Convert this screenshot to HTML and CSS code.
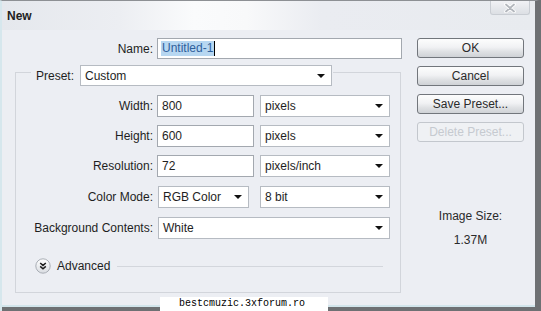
FILE: index.html
```html
<!DOCTYPE html>
<html lang="en">

<head>
	<meta charset="UTF-8">
	<title>New</title>
	<link rel="stylesheet" href="styles.css">
</head>

<body>
	<div class="dialog">
		<div class="titlebar">
			<span class="title">New</span>
			<button class="close" title="Close">
				<svg width="14" height="10" viewBox="0 0 14 10">
					<path d="M3 1.5 L11 8.5 M11 1.5 L3 8.5" stroke="#ffffff" stroke-width="3.6" stroke-linecap="round" fill="none" />
					<path d="M3 1.5 L11 8.5 M11 1.5 L3 8.5" stroke="#b3b7bd" stroke-width="1.8" stroke-linecap="round" fill="none" />
				</svg>
			</button>
		</div>

		<div class="content">
			<div class="main">
				<div class="name-row">
					<label>Name:</label>
					<div class="field name-field"><span class="selected">Untitled-1</span><span class="caret"></span></div>
				</div>

				<fieldset class="preset">
					<legend>
						<label>Preset:</label>
						<div class="select preset-select">Custom<span class="arrow"></span></div>
					</legend>

					<div class="rows">
						<div class="row">
							<label>Width:</label>
							<div class="field num">800</div>
							<div class="select unit">pixels<span class="arrow"></span></div>
						</div>
						<div class="row">
							<label>Height:</label>
							<div class="field num">600</div>
							<div class="select unit">pixels<span class="arrow"></span></div>
						</div>
						<div class="row">
							<label>Resolution:</label>
							<div class="field num">72</div>
							<div class="select unit">pixels/inch<span class="arrow"></span></div>
						</div>
						<div class="row mode">
							<label>Color Mode:</label>
							<div class="select color-mode">RGB Color<span class="arrow"></span></div>
							<div class="select bits">8 bit<span class="arrow"></span></div>
						</div>
						<div class="row mode">
							<label>Background Contents:</label>
							<div class="select background">White<span class="arrow"></span></div>
						</div>
					</div>

					<div class="advanced">
						<svg width="16" height="16" viewBox="0 0 16 16">
							<defs>
								<linearGradient id="adv" x1="0" y1="0" x2="0" y2="1">
									<stop offset="0" stop-color="#ffffff" />
									<stop offset="1" stop-color="#d9dce1" />
								</linearGradient>
							</defs>
							<circle cx="8" cy="8" r="7.2" fill="url(#adv)" stroke="#a9aeb5" />
							<path d="M5.2 5 L8 7.4 L10.8 5 M5.2 8.4 L8 10.8 L10.8 8.4" stroke="#1c1c1c" stroke-width="1.5" fill="none" />
						</svg>
						<span class="advanced-text">Advanced</span>
						<span class="rule"></span>
					</div>
				</fieldset>
			</div>

			<div class="side">
				<button class="btn">OK</button>
				<button class="btn">Cancel</button>
				<button class="btn">Save Preset...</button>
				<button class="btn" disabled>Delete Preset...</button>

				<div class="info">
					<div>Image Size:</div>
					<div class="info-value">1.37M</div>
				</div>
			</div>
		</div>

		<div class="frame-bottom"></div>

		<div class="watermark">bestcmuzic.3xforum.ro</div>
	</div>
</body>

</html>
```

FILE: styles.css
```css
* {
	margin: 0;
	padding: 0;
	box-sizing: border-box;
}

body {
	width: 541px;
	height: 311px;
	overflow: hidden;
	font-family: "Liberation Sans", Arial, sans-serif;
	font-size: 12px;
	color: #1e1e1e;
	background-color: #6e7073;
}

.dialog {
	position: relative;
	height: 311px;
	display: flex;
	flex-direction: column;
	background-color: #eceef3;
	border-top: 1px solid #8d9094;
	border-left: 2px solid #d6e7ed;
	border-right: 6px solid #6e7073;
	border-top-right-radius: 4px;
}

/* title bar */
.titlebar {
	height: 29px;
	display: flex;
	justify-content: space-between;
	align-items: flex-start;
	padding: 0 5px;
	background: linear-gradient(90deg, #e5e8ed 0%, #eceef2 22%, #fafbfc 36%, #f8f9fa 46%, #eaecf1 60%, #e8ebef 100%);
}

.title {
	font-weight: bold;
	line-height: 14px;
	margin-top: 8px;
	color: #222;
}

.close {
	width: 40px;
	height: 14px;
	border: 1px solid #c9cdd3;
	border-top: none;
	border-radius: 0 0 3px 3px;
	background: linear-gradient(#f1f2f5, #dcdfe4);
	display: flex;
	align-items: center;
	justify-content: center;
}

.content {
	flex: 1;
	display: flex;
}

.main {
	width: 400px;
	padding-top: 8px;
}

label {
	line-height: 14px;
	white-space: nowrap;
}

.name-row {
	display: flex;
	align-items: center;
}

.name-row label {
	width: 151px;
	text-align: right;
	margin-right: 4px;
}

/* inputs and drop-downs */
.field,
.select {
	height: 22px;
	background-color: #fff;
	border: 1px solid #a3a8af;
	padding: 0 4px;
	display: flex;
	align-items: center;
	white-space: nowrap;
}

.select {
	justify-content: space-between;
	border-color: #b6bbc2;
}

.arrow {
	width: 0;
	height: 0;
	margin-right: 2px;
	border-left: 4px solid transparent;
	border-right: 4px solid transparent;
	border-top: 4px solid #111;
}

.name-field {
	width: 245px;
	height: 21px;
	padding-left: 3px;
}

.selected {
	background-color: #b7d7f1;
	color: #2f609c;
	padding: 0 1px;
	line-height: 15px;
}

.caret {
	width: 1px;
	height: 15px;
	background-color: #000;
}

/* preset group */
fieldset.preset {
	margin: 0 2px 0 13px;
	border: 1px solid #d2d5db;
	padding: 9px 10px 18px 15px;
}

legend {
	display: flex;
	align-items: center;
	padding: 6px 1px 0 5px;
}

legend label {
	margin-right: 6px;
}

.preset-select {
	width: 252px;
	height: 21px;
}

.rows {
	display: flex;
	flex-direction: column;
	gap: 8px;
}

.row {
	display: flex;
	align-items: center;
	height: 22px;
}

.row.mode {
	margin-top: 1px;
}

.row label {
	width: 122px;
	text-align: right;
	margin-right: 4px;
}

.num {
	width: 97px;
}

.unit {
	width: 130px;
	margin-left: 6px;
}

.color-mode {
	width: 91px;
	margin-left: 1px;
}

.bits {
	width: 130px;
	margin-left: 11px;
}

.background {
	width: 232px;
	margin-left: 1px;
}

.advanced {
	display: flex;
	align-items: center;
	height: 16px;
	margin-top: 19px;
	padding-left: 4px;
}

.advanced-text {
	margin-left: 6px;
}

.rule {
	flex: 1;
	height: 1px;
	margin: 0 7px;
	background-color: #d3d6dc;
}

/* right column */
.side {
	width: 107px;
	margin-left: 15px;
	padding-top: 8px;
	display: flex;
	flex-direction: column;
	gap: 8px;
}

.btn {
	height: 20px;
	font-family: inherit;
	font-size: 12px;
	color: #2a2a2a;
	border: 1px solid #72767c;
	border-radius: 3px;
	background: linear-gradient(#fdfdfd 0%, #f1f2f4 45%, #dfe1e4 70%, #cfd2d6 100%);
}

.btn:disabled {
	color: #c6cad0;
	border-color: #c3c7cd;
	background: #eff1f4;
}

.info {
	margin-top: 59px;
	text-align: center;
	line-height: 14px;
	color: #2a2a2a;
}

.info-value {
	margin-top: 10px;
}

.frame-bottom {
	height: 6px;
	border-top: 2px solid #d2e5eb;
	background-color: #6e7073;
}

/* overlay stamp */
.watermark {
	position: absolute;
	left: 158px;
	bottom: 0;
	width: 168px;
	height: 14px;
	padding-left: 19px;
	background-color: #fff;
	font-family: "Liberation Mono", monospace;
	font-size: 10px;
	line-height: 14px;
	color: #000;
}
```
